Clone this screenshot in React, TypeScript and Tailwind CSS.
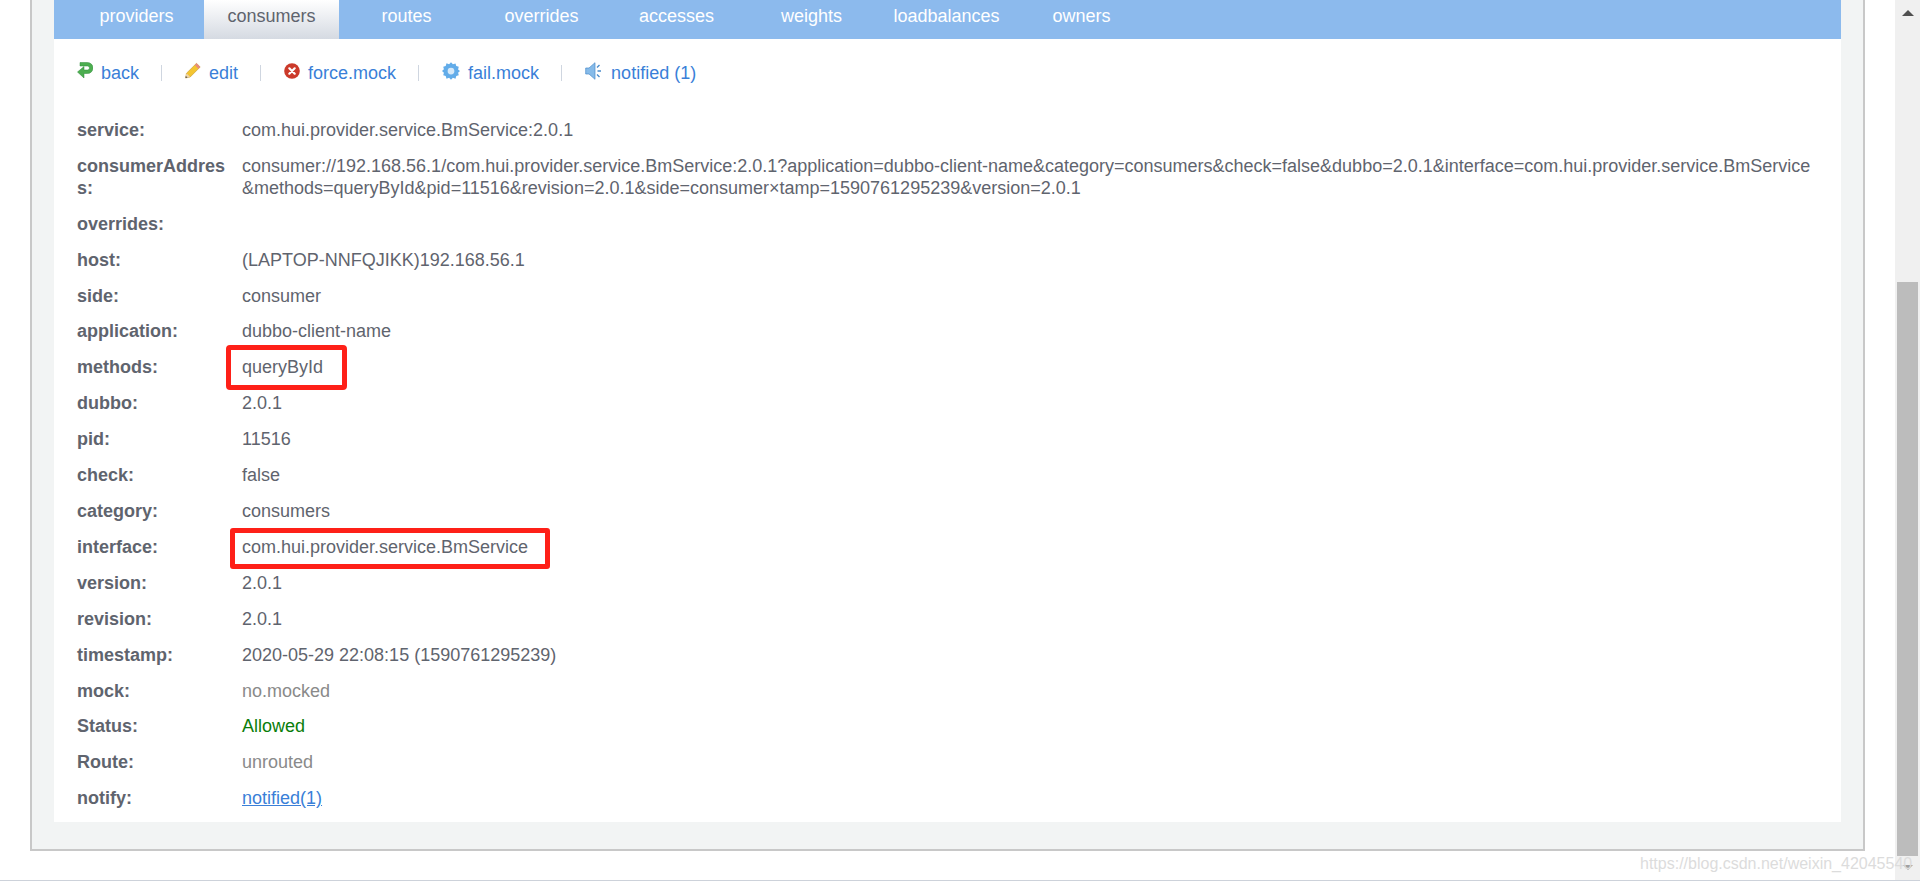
const FONT = "font-['Liberation_Sans',Arial,sans-serif]";

const TABS = ["providers", "consumers", "routes", "overrides", "accesses", "weights", "loadbalances", "owners"];

const ROWS: { label: React.ReactNode; value: React.ReactNode; tone?: string }[] = [
  { label: "service:", value: "com.hui.provider.service.BmService:2.0.1" },
  {
    label: (
      <>
        consumerAddres
        <br />
        s:
      </>
    ),
    value: (
      <>
        consumer://192.168.56.1/com.hui.provider.service.BmService:2.0.1?application=dubbo-client-name&amp;category=consumers&amp;check=false&amp;dubbo=2.0.1&amp;interface=com.hui.provider.service.BmService
        <br />
        &amp;methods=queryById&amp;pid=11516&amp;revision=2.0.1&amp;side=consumer×tamp=1590761295239&amp;version=2.0.1
      </>
    ),
  },
  { label: "overrides:", value: "" },
  { label: "host:", value: "(LAPTOP-NNFQJIKK)192.168.56.1" },
  { label: "side:", value: "consumer" },
  { label: "application:", value: "dubbo-client-name" },
  { label: "methods:", value: "queryById" },
  { label: "dubbo:", value: "2.0.1" },
  { label: "pid:", value: "11516" },
  { label: "check:", value: "false" },
  { label: "category:", value: "consumers" },
  { label: "interface:", value: "com.hui.provider.service.BmService" },
  { label: "version:", value: "2.0.1" },
  { label: "revision:", value: "2.0.1" },
  { label: "timestamp:", value: "2020-05-29 22:08:15 (1590761295239)" },
  { label: "mock:", value: "no.mocked", tone: "text-[#8a8a8a]" },
  { label: "Status:", value: "Allowed", tone: "text-[#0a7d0a]" },
  { label: "Route:", value: "unrouted", tone: "text-[#8a8a8a]" },
  {
    label: "notify:",
    value: (
      <a href="#" className="text-[#3a7fd8] underline">
        notified(1)
      </a>
    ),
  },
];

function BackIcon() {
  return (
    <svg width="16" height="17" viewBox="0 0 16 17">
      <path
        d="M3 .5h7.500a5.500 5.500 0 0 1 0 11H7V16L.5 10 7 4.500V8h3.500a2 2 0 0 0 0-4H3z"
        fill="#4cae50"
        stroke="#2f8a38"
        strokeWidth="0.5"
      />
    </svg>
  );
}

function EditIcon() {
  return (
    <svg width="16" height="17" viewBox="0 0 16 16">
      <path d="M.5 15.500l1-4.800L11.500.8l3.700 3.700-10 10z" fill="#f4c531" stroke="#b98a1f" strokeWidth="0.5" />
      <path d="M11.500.8l3.700 3.700-1.700 1.700-3.700-3.700z" fill="#e58a84" />
      <path d="M.5 15.500l1-4.800 3.700 3.800z" fill="#ecd3ab" />
      <path d="M.5 15.500l.4-2 1.600 1.600z" fill="#444" />
    </svg>
  );
}

function ErrorIcon() {
  return (
    <svg width="16" height="16" viewBox="0 0 16 16">
      <circle cx="8" cy="8" r="7.800" fill="#cb3a2a" />
      <path d="M5.300 5.300l5.400 5.400M10.700 5.300l-5.400 5.400" stroke="#fff" strokeWidth="2.200" strokeLinecap="round" />
    </svg>
  );
}

function GearIcon() {
  return (
    <svg width="18" height="18" viewBox="0 0 16 16">
      <path
        d="M8 .3l1.700 1.700 2.300-.7.700 2.300 2.200.7-.6 2.300L16 8l-1.700 1.500.6 2.300-2.200.7-.7 2.300-2.300-.7L8 15.700l-1.700-1.600-2.300.7-.7-2.300-2.200-.7.6-2.300L0 8l1.700-1.500-.6-2.300 2.200-.7.7-2.300 2.300.7z"
        fill="#62ace9"
      />
      <circle cx="8" cy="8" r="3" fill="#d6e9f9" />
    </svg>
  );
}

function SpeakerIcon() {
  return (
    <svg width="18" height="18" viewBox="0 0 18 18">
      <path d="M.7 6H4l6-5.300v16.600L4 12H.7z" fill="#86bbe9" stroke="#4a8ccb" strokeWidth="0.7" />
      <path d="M12 5.500l2.500-2.500M12.500 9H16M12 12.500l2.500 2.500" stroke="#4a8ccb" strokeWidth="1.400" />
    </svg>
  );
}

const ACTIONS = [
  { icon: <BackIcon />, text: "back" },
  { icon: <EditIcon />, text: "edit" },
  { icon: <ErrorIcon />, text: "force.mock" },
  { icon: <GearIcon />, text: "fail.mock" },
  { icon: <SpeakerIcon />, text: "notified (1)" },
];

export default function App() {
  return (
    <div className={`${FONT} relative flex h-[881px] overflow-hidden bg-white text-[18px] text-[#5f646e]`}>
      <div className="flex-1 pl-[30px] pr-[30px]">
        <div className="h-[851px] border-x-2 border-b-2 border-[#c8c8c8] bg-[#f2f4f4] px-[22px] pb-[27px]">
          <div className="h-full bg-white">
            <div className="flex h-[39px] bg-[#8cbaed] pl-[15px]">
              {TABS.map((tab) => (
                <a
                  key={tab}
                  href="#"
                  className={
                    tab === "consumers"
                      ? "flex w-[135px] items-center justify-center bg-gradient-to-b from-white to-[#d5dae2] pb-[7px] text-[#5f646e]"
                      : "flex w-[135px] items-center justify-center pb-[7px] text-white"
                  }
                >
                  {tab}
                </a>
              ))}
            </div>

            <div className="flex h-[68px] items-center pl-[23px] text-[#3a7fd8]">
              {ACTIONS.map((action, i) => (
                <div key={action.text} className="flex items-center">
                  {i > 0 && <span className="ml-[22px] mr-[23px] h-[16px] w-px bg-[#cfd6e0]" />}
                  <span className="mr-[8px] -mt-[5px] flex">{action.icon}</span>
                  <a href="#">{action.text}</a>
                </div>
              ))}
            </div>

            <div className="pl-[23px] pr-[20px] pt-[6px]">
              {ROWS.map((row, i) => (
                <div key={i} className="flex py-[7px] leading-[21.900px]">
                  <div className="w-[165px] shrink-0 font-bold">{row.label}</div>
                  <div className={row.tone ?? ""}>{row.value}</div>
                </div>
              ))}
            </div>
          </div>
        </div>
      </div>

      <div className="flex w-[25px] flex-col items-center bg-[#f0f0f0]">
        <div className="mt-[10px] h-0 w-0 border-x-[6px] border-b-[6px] border-x-transparent border-b-[#505050]" />
        <div className="mt-[266px] h-[574px] w-[21px] bg-[#bcbcbc]" />
        <div className="mt-[9px] h-0 w-0 border-x-[5px] border-t-[5px] border-x-transparent border-t-[#a0a0a0]" />
      </div>

      {/* annotations over the screenshot */}
      <div className="absolute left-[226px] top-[345px] h-[45px] w-[121px] rounded-[4px] border-[5px] border-[#fe2018]" />
      <div className="absolute left-[230px] top-[528px] h-[41px] w-[320px] rounded-[3px] border-[5px] border-[#fe2018]" />
      <div className="absolute left-[1640px] top-[852px] text-[16px] text-[#dcdcdc]">https://blog.csdn.net/weixin_42045540</div>
      <div className="absolute bottom-0 left-0 h-px w-full bg-[#cdd2da]" />
    </div>
  );
}
